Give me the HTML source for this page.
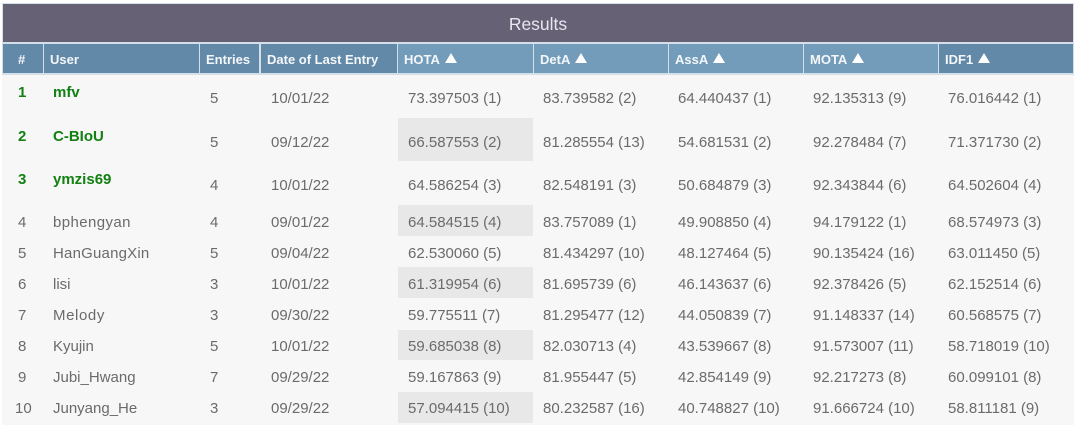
<!DOCTYPE html>
<html><head><meta charset="utf-8"><style>
html,body{margin:0;padding:0;background:#fff}
#p{position:relative;width:1080px;height:426px;overflow:hidden;background:#fff;font-family:"Liberation Sans",sans-serif;font-size:15px;color:#6b6b6b}
#p div{position:absolute}
.h{top:44px;height:29px;color:#f4f7fa;font-weight:700;font-size:13px;line-height:31px;box-sizing:border-box;padding-left:7px;white-space:nowrap}
.d{background:#6389a8}.l{background:#739cba}
.h i{display:inline-block;width:0;height:0;border-left:6.5px solid transparent;border-right:6.5px solid transparent;border-bottom:10px solid #fff;margin-left:5px;vertical-align:1px}
.g{left:398px;width:135px;background:#e8e8e8}
.t{white-space:nowrap;line-height:18px;height:18px}
.b{color:#128012;font-weight:700}
</style></head><body><div id="p">
<div style="left:2px;top:3px;width:1072px;height:422px;background:#f7f7f7"></div>
<div style="left:2px;top:3px;width:1072px;height:72px;background:#d3e0ea"></div>
<div style="left:3px;top:4px;width:1070px;height:38px;background:#676176;color:#e9e7ee;font-size:17.5px;text-align:center;line-height:41px">Results</div>
<div class="h d" style="left:3px;width:40px;padding-left:15px">#</div>
<div class="h d" style="left:44px;width:155px;padding-left:6px">User</div>
<div class="h d" style="left:200px;width:59px;padding-left:6px">Entries</div>
<div class="h d" style="left:261px;width:136px;padding-left:6px">Date of Last Entry</div>
<div class="h l" style="left:398px;width:135px;padding-left:6px">HOTA<i></i></div>
<div class="h l" style="left:534px;width:134px;padding-left:6px">DetA<i></i></div>
<div class="h l" style="left:669px;width:134px;padding-left:6px">AssA<i></i></div>
<div class="h l" style="left:804px;width:134px;padding-left:6px">MOTA<i></i></div>
<div class="h d" style="left:939px;width:134px;padding-left:6px">IDF1<i></i></div>
<div class="g" style="top:118px;height:43px"></div>
<div class="g" style="top:205px;height:31px"></div>
<div class="g" style="top:267px;height:31px"></div>
<div class="g" style="top:330px;height:30px"></div>
<div class="g" style="top:392px;height:31px"></div>

<div class="t b" style="left:18px;top:84px">1</div><div class="t b" style="left:53px;top:84px">mfv</div>
<div class="t" style="left:210px;top:90px">5</div><div class="t" style="left:271px;top:90px">10/01/22</div>
<div class="t" style="left:408px;top:90px">73.397503 (1)</div><div class="t" style="left:543px;top:90px">83.739582 (2)</div><div class="t" style="left:678px;top:90px">64.440437 (1)</div><div class="t" style="left:813px;top:90px">92.135313 (9)</div><div class="t" style="left:948px;top:90px">76.016442 (1)</div>

<div class="t b" style="left:18px;top:128px">2</div><div class="t b" style="left:53px;top:128px">C-BIoU</div>
<div class="t" style="left:210px;top:134px">5</div><div class="t" style="left:271px;top:134px">09/12/22</div>
<div class="t" style="left:408px;top:134px">66.587553 (2)</div><div class="t" style="left:543px;top:134px">81.285554 (13)</div><div class="t" style="left:678px;top:134px">54.681531 (2)</div><div class="t" style="left:813px;top:134px">92.278484 (7)</div><div class="t" style="left:948px;top:134px">71.371730 (2)</div>

<div class="t b" style="left:18px;top:171px">3</div><div class="t b" style="left:53px;top:171px">ymzis69</div>
<div class="t" style="left:210px;top:177px">4</div><div class="t" style="left:271px;top:177px">10/01/22</div>
<div class="t" style="left:408px;top:177px">64.586254 (3)</div><div class="t" style="left:543px;top:177px">82.548191 (3)</div><div class="t" style="left:678px;top:177px">50.684879 (3)</div><div class="t" style="left:813px;top:177px">92.343844 (6)</div><div class="t" style="left:948px;top:177px">64.502604 (4)</div>

<div class="t" style="left:18px;top:214px">4</div><div class="t" style="left:53px;top:214px;letter-spacing:.4px">bphengyan</div>
<div class="t" style="left:210px;top:214px">4</div><div class="t" style="left:271px;top:214px">09/01/22</div>
<div class="t" style="left:408px;top:214px">64.584515 (4)</div><div class="t" style="left:543px;top:214px">83.757089 (1)</div><div class="t" style="left:678px;top:214px">49.908850 (4)</div><div class="t" style="left:813px;top:214px">94.179122 (1)</div><div class="t" style="left:948px;top:214px">68.574973 (3)</div>

<div class="t" style="left:18px;top:245px">5</div><div class="t" style="left:53px;top:245px;letter-spacing:.2px">HanGuangXin</div>
<div class="t" style="left:210px;top:245px">5</div><div class="t" style="left:271px;top:245px">09/04/22</div>
<div class="t" style="left:408px;top:245px">62.530060 (5)</div><div class="t" style="left:543px;top:245px">81.434297 (10)</div><div class="t" style="left:678px;top:245px">48.127464 (5)</div><div class="t" style="left:813px;top:245px">90.135424 (16)</div><div class="t" style="left:948px;top:245px">63.011450 (5)</div>

<div class="t" style="left:18px;top:276px">6</div><div class="t" style="left:53px;top:276px">lisi</div>
<div class="t" style="left:210px;top:276px">3</div><div class="t" style="left:271px;top:276px">10/01/22</div>
<div class="t" style="left:408px;top:276px">61.319954 (6)</div><div class="t" style="left:543px;top:276px">81.695739 (6)</div><div class="t" style="left:678px;top:276px">46.143637 (6)</div><div class="t" style="left:813px;top:276px">92.378426 (5)</div><div class="t" style="left:948px;top:276px">62.152514 (6)</div>

<div class="t" style="left:18px;top:307px">7</div><div class="t" style="left:53px;top:307px;letter-spacing:.6px">Melody</div>
<div class="t" style="left:210px;top:307px">3</div><div class="t" style="left:271px;top:307px">09/30/22</div>
<div class="t" style="left:408px;top:307px">59.775511 (7)</div><div class="t" style="left:543px;top:307px">81.295477 (12)</div><div class="t" style="left:678px;top:307px">44.050839 (7)</div><div class="t" style="left:813px;top:307px">91.148337 (14)</div><div class="t" style="left:948px;top:307px">60.568575 (7)</div>

<div class="t" style="left:18px;top:338px">8</div><div class="t" style="left:53px;top:338px">Kyujin</div>
<div class="t" style="left:210px;top:338px">5</div><div class="t" style="left:271px;top:338px">10/01/22</div>
<div class="t" style="left:408px;top:338px">59.685038 (8)</div><div class="t" style="left:543px;top:338px">82.030713 (4)</div><div class="t" style="left:678px;top:338px">43.539667 (8)</div><div class="t" style="left:813px;top:338px">91.573007 (11)</div><div class="t" style="left:948px;top:338px">58.718019 (10)</div>

<div class="t" style="left:18px;top:369px">9</div><div class="t" style="left:53px;top:369px">Jubi_Hwang</div>
<div class="t" style="left:210px;top:369px">7</div><div class="t" style="left:271px;top:369px">09/29/22</div>
<div class="t" style="left:408px;top:369px">59.167863 (9)</div><div class="t" style="left:543px;top:369px">81.955447 (5)</div><div class="t" style="left:678px;top:369px">42.854149 (9)</div><div class="t" style="left:813px;top:369px">92.217273 (8)</div><div class="t" style="left:948px;top:369px">60.099101 (8)</div>

<div class="t" style="left:15px;top:400px">10</div><div class="t" style="left:53px;top:400px">Junyang_He</div>
<div class="t" style="left:210px;top:400px">3</div><div class="t" style="left:271px;top:400px">09/29/22</div>
<div class="t" style="left:408px;top:400px">57.094415 (10)</div><div class="t" style="left:543px;top:400px">80.232587 (16)</div><div class="t" style="left:678px;top:400px">40.748827 (10)</div><div class="t" style="left:813px;top:400px">91.666724 (10)</div><div class="t" style="left:948px;top:400px">58.811181 (9)</div>
</div></body></html>
